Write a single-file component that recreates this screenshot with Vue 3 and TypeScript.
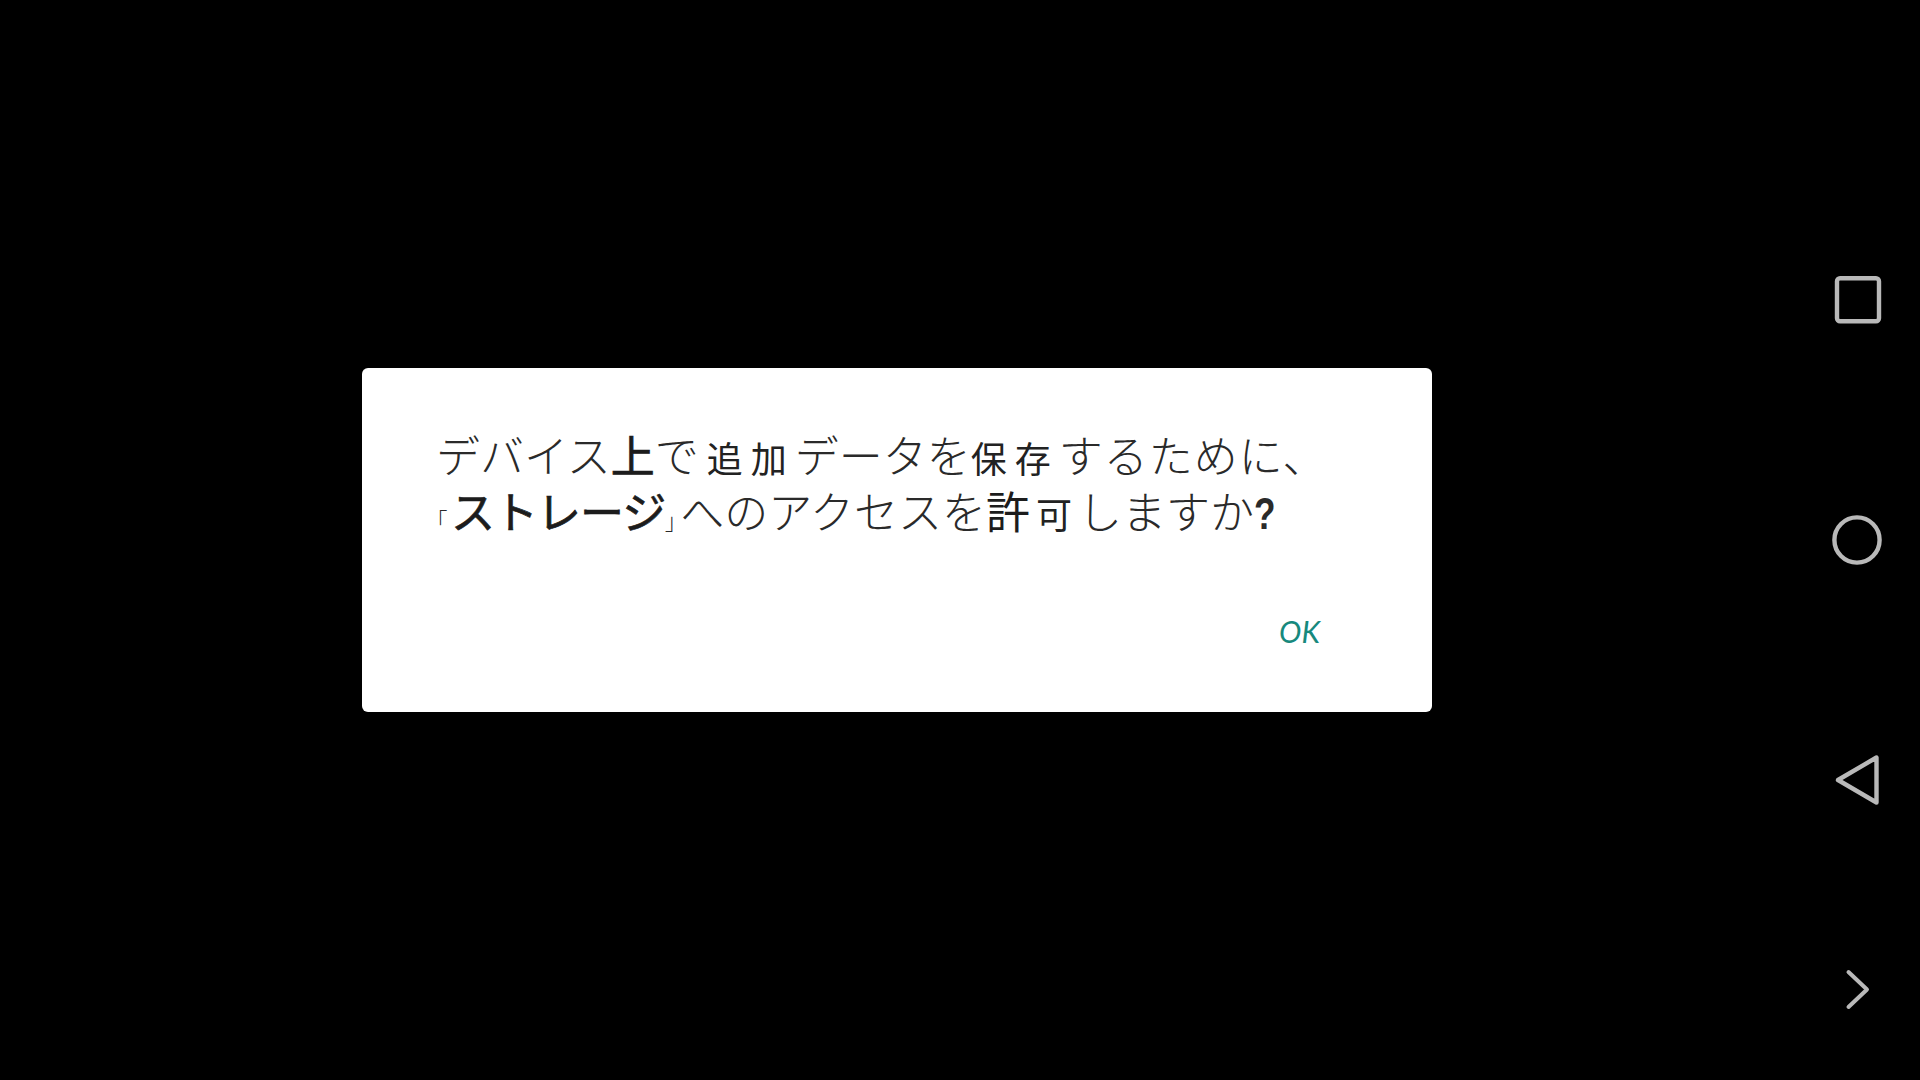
<script setup lang="ts">
interface Seg { text: string; cls?: string }
const line1: Seg[] = [
  { text: 'デバイス' },
  { text: '上', cls: 'heavy' },
  { text: 'で' },
  { text: '追加', cls: 'small first' },
  { text: 'データを' },
  { text: '保存', cls: 'small' },
  { text: 'するために、', cls: 'airy' },
]
const line2: Seg[] = [
  { text: '「', cls: 'bracket open' },
  { text: 'ストレージ', cls: 'heavy tight' },
  { text: '」', cls: 'bracket close' },
  { text: 'へのアクセスを' },
  { text: '許', cls: 'med' },
  { text: '可', cls: 'single' },
  { text: 'しますか' },
  { text: '?', cls: 'question' },
]
</script>

<template>
  <div class="screen">
    <main class="stage">
      <section class="dialog">
        <div class="message">
          <p class="line"><span v-for="(s, i) in line1" :key="i" :class="s.cls">{{ s.text }}</span></p>
          <p class="line"><span v-for="(s, i) in line2" :key="i" :class="s.cls">{{ s.text }}</span></p>
        </div>
        <div class="actions"><span class="ok">OK</span></div>
      </section>
    </main>
    <nav class="nav">
      <svg class="icon row-2" width="60" height="60" viewBox="0 0 60 60">
        <rect x="10" y="8.2" width="42" height="43" rx="3" fill="none" stroke="#b9b9b9" stroke-width="4.4" />
      </svg>
      <svg class="icon row-3" width="60" height="60" viewBox="0 0 60 60">
        <circle cx="30" cy="30" r="22.6" fill="none" stroke="#b9b9b9" stroke-width="4.4" />
      </svg>
      <svg class="icon row-4" width="60" height="60" viewBox="0 0 60 60">
        <path d="M11 30 L49.500 7.500 V52.500 Z" fill="none" stroke="#b9b9b9" stroke-width="4.4" stroke-linejoin="round" />
      </svg>
      <svg class="icon row-5" width="60" height="60" viewBox="0 0 60 60">
        <path d="M21.500 12 L40 29.500 L21.500 47" fill="none" stroke="#b9b9b9" stroke-width="4" stroke-linecap="round" stroke-linejoin="round" />
      </svg>
    </nav>
  </div>
</template>

<style>
html, body { margin: 0; background: #000; }
</style>

<style scoped>
.screen {
  width: 1920px;
  height: 1080px;
  display: flex;
  background: #000;
  overflow: hidden;
}
.stage {
  width: 1794px;
  display: flex;
  align-items: center;
  justify-content: center;
}
.dialog {
  width: 1070px;
  height: 344px;
  box-sizing: border-box;
  padding: 58px 74px 0;
  background: #fff;
  border-radius: 6px;
  display: flex;
  flex-direction: column;
}
.message {
  font-family: "Noto Sans CJK JP", sans-serif;
  font-weight: 300;
  font-size: 44px;
  line-height: 56px;
  color: #2a2a2a;
}
.line {
  margin: 0;
  white-space: nowrap;
  height: 56px;
}
.line span { display: inline-block; }
.heavy { font-weight: 400; color: #1c1c1c; -webkit-text-stroke: 0.7px #1c1c1c; }
.tight { letter-spacing: -1px; }
.med { font-weight: 400; color: #1c1c1c; }
.small { font-size: 36px; font-weight: 400; letter-spacing: 8px; color: #222; }
.first { padding-left: 8px; }
.single { font-size: 36px; font-weight: 400; padding: 0 6px; color: #222; }
.airy { letter-spacing: 1px; }
.bracket { font-size: 22px; font-feature-settings: "palt"; }
.open { margin-right: 4px; }
.close { margin-right: 4px; }
.line .question {
  font-weight: 700;
  font-size: 44px;
  font-family: "Liberation Sans", sans-serif;
  transform: scaleX(0.8);
  transform-origin: left center;
}
.actions {
  margin-top: 68px;
  display: flex;
  justify-content: flex-end;
  padding-right: 38px;
}
.ok {
  font-family: "Lato", sans-serif;
  font-style: italic;
  font-weight: 400;
  font-size: 30px;
  line-height: 50px;
  color: #17897d;
}
.nav {
  width: 126px;
  display: grid;
  grid-template-rows: 180px 240px 240px 240px 180px;
  justify-items: center;
  align-items: center;
}
.icon { display: block; }
.row-2 { grid-row: 2; }
.row-3 { grid-row: 3; }
.row-4 { grid-row: 4; }
.row-5 { grid-row: 5; }
</style>
